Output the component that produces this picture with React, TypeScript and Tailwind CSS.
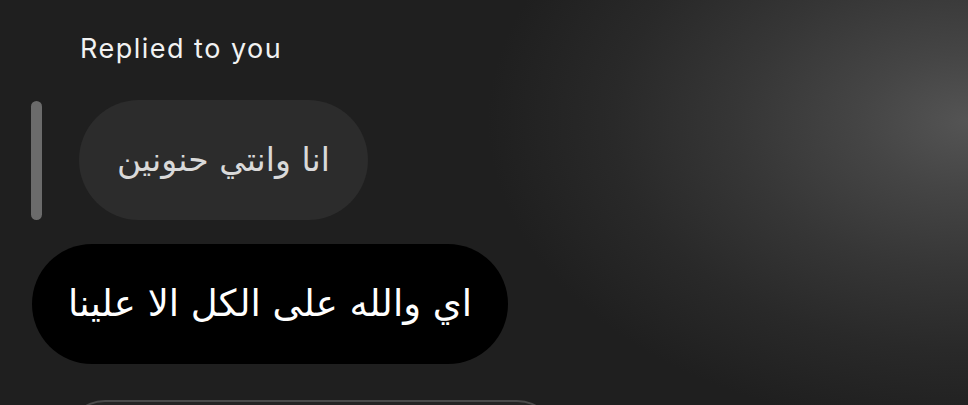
export default function App() {
  return (
    <div className="relative h-[405px] w-full overflow-hidden bg-[#1f1f1f] bg-[radial-gradient(ellipse_480px_310px_at_100%_30%,#545454_0%,#454545_22%,#363636_48%,#292929_74%,#1f1f1f_100%)] font-['Inter','Liberation_Sans',sans-serif]">
      <div className="flex flex-col pt-[31px]">
        {/* reply header */}
        <div className="ml-[80px] text-[27px] leading-[36px] tracking-[0.055em] text-[#f2f2f2]">
          Replied to you
        </div>

        {/* quoted message */}
        <div className="mt-[33px] ml-[31px] flex items-center gap-[37px]">
          <div className="h-[119px] w-[11px] rounded-full bg-[#6b6b6b]" />
          <div
            dir="rtl"
            className="flex h-[120px] items-center rounded-full bg-[#2c2c2c] px-[38px] font-['DejaVu_Sans',sans-serif] text-[33px] text-[#d9d9d9]"
          >
            انا وانتي حنونين
          </div>
        </div>

        {/* own reply */}
        <div className="mt-[24px] ml-[32px] flex">
          <div
            dir="rtl"
            className="flex h-[120px] items-center rounded-full bg-black px-[36px] font-['DejaVu_Sans',sans-serif] text-[37px] text-white"
          >
            اي والله على الكل الا علينا
          </div>
        </div>

        {/* next bubble, cut off */}
        <div className="mt-[36px] ml-[65px] h-[60px] w-[492px] rounded-t-[40px] border-t-2 border-[#4a4a4a] bg-[#242424]" />
      </div>
    </div>
  );
}
